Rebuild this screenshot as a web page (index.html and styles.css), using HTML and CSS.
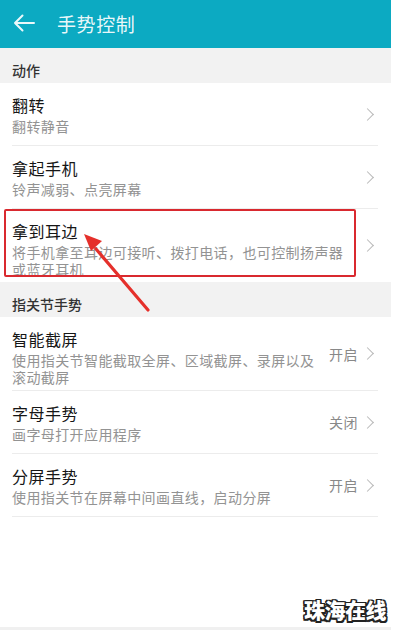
FILE: index.html
```html
<!DOCTYPE html>
<html lang="zh">
<head>
<meta charset="utf-8">
<link rel="stylesheet" href="styles.css">
</head>
<body>
<div class="page">
  <header class="appbar">
    <svg class="back" width="22" height="18" viewBox="0 0 22 18"><path d="M21 9H2M9.5 1.5L2 9l7.5 7.5" fill="none" stroke="#fff" stroke-width="2" stroke-linecap="round" stroke-linejoin="round" opacity="0.92"/></svg>
    <h1 class="title">手势控制</h1>
  </header>

  <div class="section">动作</div>
  <div class="item">
    <div class="text"><div class="name">翻转</div><div class="desc">翻转静音</div></div>
    <div class="right"><span class="chev"></span></div>
  </div>
  <div class="item">
    <div class="text"><div class="name">拿起手机</div><div class="desc">铃声减弱、点亮屏幕</div></div>
    <div class="right"><span class="chev"></span></div>
  </div>
  <div class="item last tall">
    <div class="text wide"><div class="name">拿到耳边</div><div class="desc">将手机拿至耳边可接听、拨打电话，也可控制扬声器或蓝牙耳机</div></div>
    <div class="right"><span class="chev"></span></div>
  </div>

  <div class="section">指关节手势</div>
  <div class="item tall">
    <div class="text"><div class="name">智能截屏</div><div class="desc">使用指关节智能截取全屏、区域截屏、录屏以及滚动截屏</div></div>
    <div class="right"><span class="val">开启</span><span class="chev"></span></div>
  </div>
  <div class="item">
    <div class="text"><div class="name">字母手势</div><div class="desc">画字母打开应用程序</div></div>
    <div class="right"><span class="val">关闭</span><span class="chev"></span></div>
  </div>
  <div class="item">
    <div class="text"><div class="name">分屏手势</div><div class="desc">使用指关节在屏幕中间画直线，启动分屏</div></div>
    <div class="right"><span class="val">开启</span><span class="chev"></span></div>
  </div>

  <div class="highlight"></div>
  <svg class="arrow" width="80" height="90" viewBox="0 0 80 90">
    <path d="M72 84 L20 23" stroke="#e5302b" stroke-width="3.2" stroke-linecap="round"/>
    <path d="M8 8 L26 15 L15 25 Z" fill="#e5302b"/>
  </svg>
  <div class="watermark">珠海在线</div>
  <div class="bottomstrip"></div>
</div>
</body>
</html>
```
FILE: styles.css
```css
* { box-sizing: border-box; }
html, body { margin: 0; padding: 0; background: #fff; }
body {
  font-family: "Noto Sans CJK SC", "Noto Sans", sans-serif;
  width: 393px;
  height: 630px;
  overflow: hidden;
}
.page {
  position: relative;
  width: 391px;
  height: 630px;
  background: #fff;
}
.appbar {
  height: 48px;
  background: #0caac2;
  display: flex;
  align-items: center;
  padding-left: 13px;
}
.back { margin-right: 22px; margin-top: -2px; }
.title {
  margin: 0;
  font-size: 19px;
  font-weight: 400;
  color: rgba(255,255,255,0.93);
  letter-spacing: 0.6px;
  margin-top: -2px;
}
.section {
  background: #f2f2f2;
  height: 35px;
  padding: 13px 0 0 12px;
  font-size: 14px;
  line-height: 18px;
  color: #333;
  font-weight: 500;
}
.item {
  display: flex;
  align-items: stretch;
  margin: 0 13px 0 12px;
  min-height: 63px;
  padding: 12px 0 4px;
  border-bottom: 1px solid #ececec;
}
.item.last { border-bottom: none; }
.text { flex: 0 0 308px; }
.text.wide { flex: 0 0 340px; }
.name {
  font-size: 16px;
  line-height: 20px;
  color: #161616;
  letter-spacing: 0.5px;
}
.desc {
  margin-top: 3px;
  font-size: 14px;
  line-height: 17px;
  color: #939393;
  letter-spacing: 0.4px;
}
.right {
  flex: 1;
  display: flex;
  align-items: center;
  justify-content: flex-end;
  margin-top: -8px;
  padding-right: 4px;
}
.val {
  font-size: 14px;
  color: #888;
  margin-right: 5px;
  letter-spacing: 0.5px;
}
.chev {
  width: 9px;
  height: 9px;
  border-top: 1.3px solid #b8b8b8;
  border-right: 1.3px solid #b8b8b8;
  transform: rotate(45deg);
  margin-right: 2px;
}
.highlight {
  position: absolute;
  left: 4px;
  top: 209px;
  width: 352px;
  height: 68px;
  border: 2px solid #d9292f;
  border-radius: 2px;
}
.arrow {
  position: absolute;
  left: 76px;
  top: 226px;
}
.watermark {
  position: absolute;
  right: 5px;
  top: 594px;
  font-size: 21px;
  font-weight: 900;
  color: #fff;
  letter-spacing: -0.5px;
  text-shadow:
    -1.5px -1.5px 0 #222, 1.5px -1.5px 0 #222, -1.5px 1.5px 0 #222, 1.5px 1.5px 0 #222,
    0 -1.5px 0 #222, 0 1.5px 0 #222, -1.5px 0 0 #222, 1.5px 0 0 #222;
}
.bottomstrip {
  position: absolute;
  left: 0;
  right: 0;
  top: 627px;
  height: 3px;
  background: #f0f0f0;
}
```
